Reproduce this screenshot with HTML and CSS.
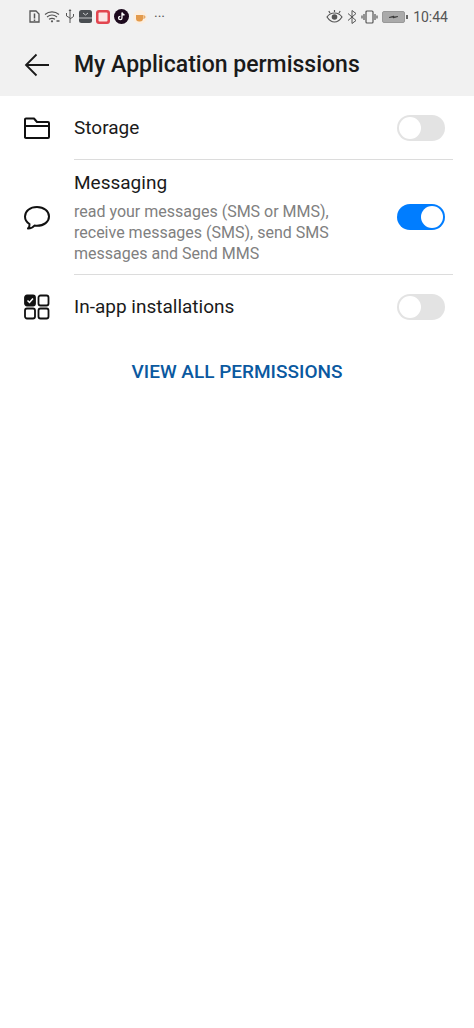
FILE: index.html
```html
<!DOCTYPE html>
<html lang="en">
<head>
    <meta charset="UTF-8">
    <meta name="viewport" content="width=device-width, initial-scale=1.0">
    <title>My Application permissions</title>
    <link rel="stylesheet" href="styles.css">
</head>
<body>
  <div class="top-area">
    <div class="status-bar">
      <div class="status-left">
        <svg width="11" height="13" viewBox="0 0 11 13" fill="none" stroke="#555" stroke-width="1.3"><path d="M1 1h6l3 3v8H1z"/><path d="M5.5 3.5v5M5.5 9.5v1.5" stroke-width="1.5"/></svg>
        <svg width="17" height="13" viewBox="0 0 17 13" fill="none" stroke="#555" stroke-width="1.1"><path d="M1 4.5C5 1 11 1 15 4.5M3 7c3-2.400 7-2.400 10 0M5 9.300c2-1.300 4-1.300 6 0"/><circle cx="8" cy="11.300" r="1.100" fill="#555" stroke="none"/><path d="M12.500 11h3" stroke-width="1.500"/></svg>
        <svg class="usb" width="10" height="15" viewBox="0 0 10 15" fill="none" stroke="#555" stroke-width="1"><path d="M5 1v13M1.500 4v3l3.500 2M8.500 5v2.500L5 10"/><path d="M5 0l1.500 2h-3z" fill="#555" stroke="none"/></svg>
        <svg width="13" height="13" viewBox="0 0 13 13"><rect width="13" height="13" rx="2.500" fill="#4a4e52"/><path d="M0 7.500h13v1H0z" fill="#c9cbcc"/><path d="M4 3l2.500 2L9 3" fill="none" stroke="#c9cbcc"/></svg>
        <svg width="14" height="14" viewBox="0 0 14 14"><rect width="14" height="14" rx="3" fill="#e2454f"/><rect x="2.500" y="2.500" width="9" height="9" rx="1" fill="#fbe6e6"/></svg>
        <svg width="15" height="15" viewBox="0 0 15 15"><circle cx="7.500" cy="7.500" r="7.500" fill="#1d0a1e"/><path d="M8 3.500v5.500a1.700 1.700 0 1 1-1.700-1.700M8 3.500c.3 1.500 1.200 2.300 2.600 2.400" fill="none" stroke="#fff" stroke-width="1.300"/></svg>
        <svg width="14" height="14" viewBox="0 0 14 14"><circle cx="7" cy="7" r="7" fill="#fbeee0"/><path d="M3 5h7v3.500a3 3 0 0 1-3 3H6a3 3 0 0 1-3-3z" fill="#e39a4b"/><path d="M10 6h1.800v2H10" fill="none" stroke="#e39a4b"/></svg>
        <span class="more-dots">···</span>
      </div>
      <div class="status-right">
        <svg width="17" height="13" viewBox="0 0 17 13" fill="none" stroke="#555" stroke-width="1.200"><path d="M1 7c2-3 4.500-4 7.500-4s5.500 1 7.500 4c-2 3-4.500 5-7.500 5S3 10 1 7z"/><circle cx="8.500" cy="7" r="2.800" fill="#555" stroke="none"/><path d="M4 3L2.800 1M8.500 2V0M13 3l1.200-2"/></svg>
        <svg width="10" height="14" viewBox="0 0 10 14" fill="none" stroke="#555" stroke-width="1"><path d="M1 3.500l8 7L5 13.500V.5l4 3-8 7"/></svg>
        <svg width="17" height="14" viewBox="0 0 17 14" fill="none" stroke="#555" stroke-width="1.200"><rect x="5" y="1" width="7" height="12" rx="1"/><path d="M3 4v6M1 5.500v3M14 4v6M16 5.500v3"/></svg>
        <svg class="battery" width="26" height="12" viewBox="0 0 26 12"><rect x=".5" y=".5" width="22" height="11" rx="1.500" fill="#aaa" stroke="#999"/><rect x="24" y="4" width="2" height="4" fill="#666"/><path d="M7 6.500l5-1.500v1l4-.5-5 1.500v-1z" fill="#333" stroke="#333" stroke-width=".6"/></svg>
        <span class="clock">10:44</span>
      </div>
    </div>
    <div class="title-bar">
      <svg class="back-icon" width="26" height="24" viewBox="0 0 26 24" fill="none" stroke="#1a1a1a" stroke-width="1.800"><path d="M25 12H2M12.500 1.500L2 12l10.500 10.500"/></svg>
      <h1 class="page-title">My Application permissions</h1>
    </div>
  </div>

  <div class="perm-list">
    <div class="perm-row">
      <svg class="perm-icon" width="28" height="24" viewBox="0 0 28 24" fill="none" stroke="#111" stroke-width="2" stroke-linejoin="round"><path d="M2 21.500V3.500a1 1 0 0 1 1-1h8l3 3.500h11a1 1 0 0 1 1 1v14a1 1 0 0 1-1 1H3a1 1 0 0 1-1-1z"/><path d="M2 10h24"/></svg>
      <div class="perm-body perm-storage">
        <div class="perm-text"><div class="perm-name">Storage</div></div>
        <div class="switch"><div class="knob"></div></div>
      </div>
    </div>
    <div class="perm-row">
      <svg class="perm-icon" width="28" height="26" viewBox="0 0 28 26" fill="none" stroke="#111" stroke-width="2" stroke-linejoin="round"><path d="M14 2C7 2 2 6 2 11.500c0 3.500 2 6 4.500 7.500.3 1.800-.3 3.200-1.500 4.500 2.500 0 5-1 6.500-3 1 .2 1.700.3 2.500.3 7 0 12-4 12-9.300S21 2 14 2z"/></svg>
      <div class="perm-body perm-messaging">
        <div class="perm-text">
          <div class="perm-name">Messaging</div>
          <div class="perm-desc">read your messages (SMS or MMS), receive messages (SMS), send SMS messages and Send MMS</div>
        </div>
        <div class="switch on"><div class="knob"></div></div>
      </div>
    </div>
    <div class="perm-row">
      <svg class="perm-icon" width="28" height="26" viewBox="0 0 28 26" fill="none" stroke="#111" stroke-width="1.800"><rect x="2" y="1.500" width="10" height="10" rx="2" fill="#111"/><path d="M4.500 6.500l2 2 3.500-4" stroke="#fff" stroke-width="1.500"/><rect x="15.500" y="1.500" width="10" height="10" rx="2"/><rect x="2" y="14.500" width="10" height="10" rx="2"/><rect x="15.500" y="14.500" width="10" height="10" rx="2"/></svg>
      <div class="perm-body perm-install">
        <div class="perm-text"><div class="perm-name">In-app installations</div></div>
        <div class="switch"><div class="knob"></div></div>
      </div>
    </div>
  </div>

  <div class="view-all">VIEW ALL PERMISSIONS</div>
</body>
</html>
```

FILE: styles.css
```css
body {
    margin: 0;
    background: #ffffff;
    font-family: Roboto, "Noto Sans", sans-serif;
    color: #1a1a1a;
}

.top-area {
    background: #f1f1f1;
    height: 96px;
}

.status-bar {
    height: 33px;
    padding: 0 26px 0 29px;
    display: flex;
    justify-content: space-between;
    align-items: center;
}

.status-left,
.status-right {
    display: flex;
    align-items: center;
    gap: 4px;
}

.more-dots {
    font-size: 14px;
    color: #555;
    margin-left: 3px;
}

.clock {
    font-size: 14px;
    color: #555;
    margin-left: 1px;
}

.title-bar {
    display: flex;
    align-items: center;
    height: 63px;
    padding-left: 24px;
}

.back-icon {
    flex: none;
}

.page-title {
    margin: 0 0 0 24px;
    font-size: 23px;
    font-weight: 500;
    color: #1a1a1a;
}

.perm-row {
    display: flex;
    align-items: center;
    padding: 0 21px 0 23px;
}

.perm-icon {
    flex: none;
    margin-right: 23px;
}

.perm-body {
    flex: 1;
    display: flex;
    align-items: center;
    justify-content: space-between;
    border-bottom: 1px solid #dcdcdc;
}

.perm-row:last-child .perm-body {
    border-bottom: none;
}

.perm-storage {
    height: 63px;
}

.perm-messaging {
    height: 114px;
}

.perm-install {
    height: 64px;
}

.perm-name {
    font-size: 19px;
    line-height: 24px;
}

.perm-desc {
    width: 290px;
    margin-top: 6px;
    font-size: 16px;
    line-height: 21px;
    color: #808080;
}

.switch {
    flex: none;
    width: 48px;
    height: 26px;
    margin-right: 8px;
    border-radius: 13px;
    background: #e3e3e3;
    position: relative;
}

.switch .knob {
    position: absolute;
    top: 2px;
    left: 2px;
    width: 22px;
    height: 22px;
    border-radius: 50%;
    background: #ffffff;
}

.switch.on {
    background: #007dff;
}

.switch.on .knob {
    left: 24px;
}

.view-all {
    margin-top: 21px;
    text-align: center;
    font-size: 19px;
    line-height: 24px;
    font-weight: 500;
    color: #0a59a0;
}
```
